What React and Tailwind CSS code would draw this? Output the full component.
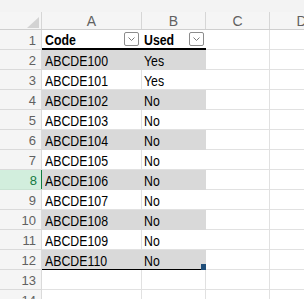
import React from 'react';

const rows = [
    ['ABCDE100', 'Yes'],
    ['ABCDE101', 'Yes'],
    ['ABCDE102', 'No'],
    ['ABCDE103', 'No'],
    ['ABCDE104', 'No'],
    ['ABCDE105', 'No'],
    ['ABCDE106', 'No'],
    ['ABCDE107', 'No'],
    ['ABCDE108', 'No'],
    ['ABCDE109', 'No'],
    ['ABCDE110', 'No'],
];

const cellFont = { fontFamily: '"Liberation Sans", Arial, sans-serif' };

// narrow look of the sheet's cell font
function CellText({ children, bold }) {
    return (
        <span className={`inline-block origin-left scale-x-[0.88] text-[14px] leading-none text-black pt-[2px] ${bold ? 'font-bold' : ''}`}>
            {children}
        </span>
    );
}

function FilterButton() {
    return (
        <div className="w-[15px] h-[14px] rounded-[2px] border border-[#8c8c8c] bg-white flex items-center justify-center">
            <svg width="7" height="4" viewBox="0 0 7 4" fill="none">
                <path d="M0.5 0.5 L3.5 3.5 L6.5 0.5" stroke="#7a7a7a" strokeWidth="1" />
            </svg>
        </div>
    );
}

function RowHeader({ n, selected }) {
    if (selected) {
        return (
            <div className="w-[42px] shrink-0 h-full bg-[#d2eedd] border-b border-[#c9e3d3] flex items-center justify-end pr-[5px] relative">
                <span className="text-[13px] text-[#137a42] pt-[2px]">{n}</span>
                <div className="absolute right-[-1px] top-0 bottom-0 w-[2px] bg-[#127a40]" />
            </div>
        );
    }
    return (
        <div className="w-[42px] shrink-0 h-full bg-[#f5f5f5] border-r border-b border-[#dadada] flex items-center justify-end pr-[5px]">
            <span className="text-[13px] text-[#616161] pt-[2px]">{n}</span>
        </div>
    );
}

function App() {
    return (
        <div className="w-[304px] h-[299px] overflow-hidden bg-white relative" style={cellFont}>
            {/* top strip */}
            <div className="h-[12px] bg-[#f3f3f3]" />

            {/* column letters */}
            <div className="flex h-[18px] bg-[#f5f5f5] border-b border-[#cfcfcf]">
                <div className="w-[42px] shrink-0 border-r border-[#d6d6d6] relative">
                    <svg className="absolute left-[27px] top-[5px]" width="12" height="11" viewBox="0 0 12 11">
                        <polygon points="12,0 12,11 0,11" fill="#d3d3d3" />
                    </svg>
                </div>
                {[['A', 'w-[100px]'], ['B', 'w-[64px]'], ['C', 'w-[64px]'], ['D', 'w-[64px]']].map(([l, w]) => (
                    <div key={l} className={`${w} shrink-0 border-r border-[#d6d6d6] flex items-center justify-center`}>
                        <span className="text-[14px] text-[#616161] leading-none pt-[1px]">{l}</span>
                    </div>
                ))}
            </div>

            {/* header row */}
            <div className="flex h-[20px]">
                <RowHeader n={1} />
                <div className="w-[100px] shrink-0 h-full bg-white border-b-2 border-black flex items-center justify-between pl-[3px] pr-[3px]">
                    <CellText bold>Code</CellText>
                    <FilterButton />
                </div>
                <div className="w-[64px] shrink-0 h-full bg-white border-b-2 border-black flex items-center justify-between pl-[2px] pr-[2px]">
                    <CellText bold>Used</CellText>
                    <FilterButton />
                </div>
                <div className="w-[64px] shrink-0 h-full border-r border-b border-[#e1e1e1]" />
                <div className="w-[64px] shrink-0 h-full border-r border-b border-[#e1e1e1]" />
            </div>

            {rows.map(([code, used], i) => {
                const n = i + 2;
                const banded = n % 2 === 0;
                const last = i === rows.length - 1;
                return (
                    <div key={n} className="flex h-[20px]">
                        <RowHeader n={n} selected={n === 8} />
                        <div
                            className={`w-[164px] shrink-0 h-full flex relative ${
                                banded ? 'bg-[#d9d9d9]' : 'bg-white border-b border-[#e1e1e1]'
                            } ${last ? 'border-b border-black' : ''}`}
                        >
                            <div className={`w-[100px] h-full flex items-center pl-[3px] ${banded ? '' : 'border-r border-[#e1e1e1]'}`}>
                                <CellText>{code}</CellText>
                            </div>
                            <div className="w-[64px] h-full flex items-center pl-[2px]">
                                <CellText>{used}</CellText>
                            </div>
                            {last && <div className="absolute right-0 bottom-[-1px] w-[5px] h-[6px] bg-[#1f4e79]" />}
                        </div>
                        <div className="w-[64px] shrink-0 h-full border-r border-b border-[#e1e1e1]" />
                        <div className="w-[64px] shrink-0 h-full border-r border-b border-[#e1e1e1]" />
                    </div>
                );
            })}

            {[13, 14].map(n => (
                <div key={n} className="flex h-[20px]">
                    <RowHeader n={n} />
                    <div className="w-[100px] shrink-0 h-full border-r border-b border-[#e1e1e1]" />
                    <div className="w-[64px] shrink-0 h-full border-r border-b border-[#e1e1e1]" />
                    <div className="w-[64px] shrink-0 h-full border-r border-b border-[#e1e1e1]" />
                    <div className="w-[64px] shrink-0 h-full border-r border-b border-[#e1e1e1]" />
                </div>
            ))}
        </div>
    );
}

export default App;
